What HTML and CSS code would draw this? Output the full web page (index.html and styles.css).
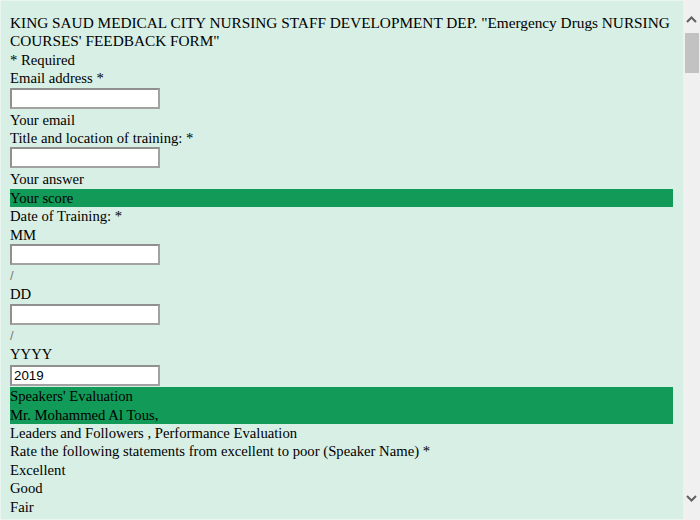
FILE: index.html
```html
<!DOCTYPE html>
<html lang="en">
<head>
<meta charset="utf-8">
<title>Feedback Form</title>
<link rel="stylesheet" href="styles.css">
</head>
<body>
<div class="window">
  <main class="page">
    <form class="form">
      <div class="line title">KING SAUD MEDICAL CITY NURSING STAFF DEVELOPMENT DEP. "Emergency Drugs NURSING COURSES' FEEDBACK FORM"</div>
      <div class="line">* Required</div>
      <div class="line">Email address *</div>
      <div class="field"><input type="text"></div>
      <div class="line">Your email</div>
      <div class="line">Title and location of training: *</div>
      <div class="field"><input type="text"></div>
      <div class="line">Your answer</div>
      <div class="bar"><div class="line">Your score</div></div>
      <div class="line">Date of Training: *</div>
      <div class="line">MM</div>
      <div class="field"><input type="text"></div>
      <div class="sep">/</div>
      <div class="line">DD</div>
      <div class="field"><input type="text"></div>
      <div class="sep">/</div>
      <div class="line">YYYY</div>
      <div class="field field-year"><input type="text" value="2019"></div>
      <div class="bar">
        <div class="line">Speakers' Evaluation</div>
        <div class="line">Mr. Mohammed Al Tous,</div>
      </div>
      <div class="line">Leaders and Followers , Performance Evaluation</div>
      <div class="line">Rate the following statements from excellent to poor (Speaker Name) *</div>
      <div class="line">Excellent</div>
      <div class="line">Good</div>
      <div class="line">Fair</div>
      <div class="line">Poor</div>
    </form>
  </main>
  <div class="scrollbar">
    <div class="sb-up">
      <svg width="11" height="7" viewBox="0 0 11 7"><path d="M1 6 L5.5 1.5 L10 6" fill="none" stroke="#606060" stroke-width="2"/></svg>
    </div>
    <div class="sb-track"><div class="sb-thumb"></div></div>
    <div class="sb-down">
      <svg width="11" height="7" viewBox="0 0 11 7"><path d="M1 1 L5.5 5.5 L10 1" fill="none" stroke="#606060" stroke-width="2"/></svg>
    </div>
  </div>
</div>
</body>
</html>
```
FILE: styles.css
```css
html, body {
  margin: 0;
  padding: 0;
  height: 100%;
}

body {
  font-family: "Liberation Serif", "Times New Roman", serif;
  font-size: 14.7px;
  color: #000;
  background: #d8efe5;
  overflow: hidden;
}

.window {
  display: flex;
  height: 520px;
}

.page {
  flex: 1;
  overflow: hidden;
  border: 1px solid #e9f6f0;
  border-right: none;
  padding: 13px 10px 0 9px;
  background: #d8efe5;
}

.form {
  margin: 0;
}

.line {
  line-height: 18.4px;
}

.title {
  font-size: 15.3px;
}

.field {
  height: 23px;
  box-sizing: border-box;
}

.field-year {
  height: 24px;
  padding-top: 2px;
}

.field input {
  display: block;
  box-sizing: border-box;
  width: 150px;
  height: 21px;
  margin: 0;
  padding: 0 2px;
  border: 2px solid #a2a2a2;
  border-top-color: #909090;
  border-left-color: #909090;
  background: #fff;
  font-family: "Liberation Sans", Arial, sans-serif;
  font-size: 13.33px;
  color: #000;
}

.sep {
  height: 18.2px;
  font-family: "Liberation Sans", Arial, sans-serif;
  font-size: 13px;
  line-height: 18px;
  color: #7a7a7a;
}

.bar {
  background: #129a58;
}

.scrollbar {
  width: 17px;
  flex: none;
  display: flex;
  flex-direction: column;
  background: #f0f0f0;
}

.sb-up {
  height: 33px;
  box-sizing: border-box;
  padding-top: 6px;
  display: flex;
  justify-content: center;
  align-items: center;
}

.sb-track {
  flex: 1;
}

.sb-thumb {
  height: 40px;
  margin: 0 1px 0 2px;
  background: #c2c2c2;
}

.sb-down {
  height: 42px;
  box-sizing: border-box;
  padding-bottom: 2px;
  display: flex;
  justify-content: center;
  align-items: center;
}
```
